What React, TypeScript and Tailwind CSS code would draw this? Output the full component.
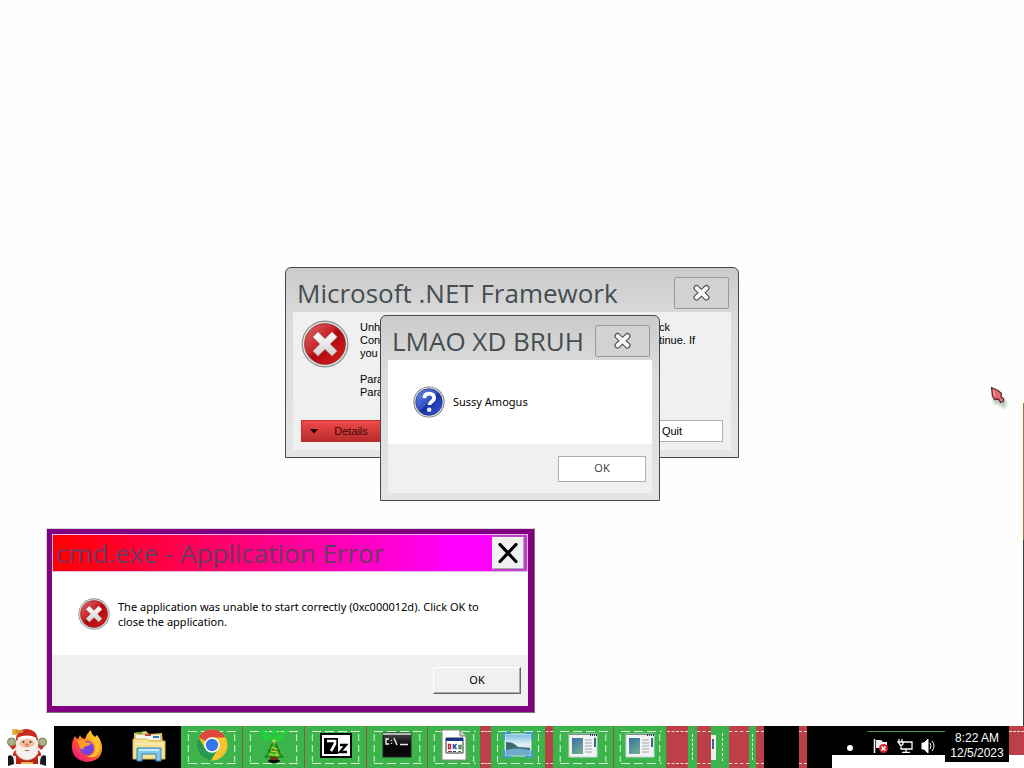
import type { ReactNode } from 'react';

const titleFont = "font-['Comic_Sans_MS','Open_Sans',sans-serif]";
const uiFont = "font-['Segoe_UI','Noto_Sans',sans-serif]";
const classicFont = "font-['Liberation_Sans',sans-serif]";

function ErrorIcon({ className }: { className: string }) {
  return (
    <svg viewBox="0 0 48 48" className={className} aria-hidden="true">
      <defs>
        <linearGradient id="errFill" x1="0" y1="0" x2="1" y2="1">
          <stop offset="0" stopColor="#dc6a68" />
          <stop offset="0.42" stopColor="#c9242a" />
          <stop offset="0.5" stopColor="#ad0910" />
          <stop offset="1" stopColor="#e02020" />
        </linearGradient>
        <linearGradient id="errCross" x1="0" y1="0" x2="0" y2="1">
          <stop offset="0" stopColor="#ffffff" />
          <stop offset="1" stopColor="#cfcfcf" />
        </linearGradient>
      </defs>
      <circle cx="24" cy="24" r="23.5" fill="#8e9292" />
      <circle cx="24" cy="24" r="22.3" fill="#dcdedc" />
      <circle cx="24" cy="24" r="20.3" fill="url(#errFill)" stroke="#8a1417" strokeWidth="0.8" />
      <path d="M11.5 17 17 11.5 24 18.5 31 11.5 36.5 17 29.5 24 36.5 31 31 36.5 24 29.5 17 36.5 11.5 31 18.5 24Z" fill="url(#errCross)" stroke="#a03035" strokeWidth="0.8" strokeLinejoin="round" />
    </svg>
  );
}

function QuestionIcon() {
  return (
    <svg viewBox="0 0 32 32" className="size-8 shrink-0" aria-hidden="true">
      <defs>
        <linearGradient id="qFill" x1="0" y1="0" x2="1" y2="1">
          <stop offset="0" stopColor="#6d8fe0" />
          <stop offset="0.48" stopColor="#2f52c4" />
          <stop offset="0.52" stopColor="#1730a0" />
          <stop offset="1" stopColor="#3a5fe0" />
        </linearGradient>
      </defs>
      <circle cx="16" cy="16" r="15.6" fill="#6f7678" />
      <circle cx="16" cy="16" r="14.7" fill="#e2e4e2" />
      <circle cx="16" cy="16" r="13.3" fill="url(#qFill)" stroke="#20347c" strokeWidth="0.7" />
      <path d="M11.3 12.2C11.5 9 13.7 7.6 16.2 7.6 19.2 7.6 21.2 9.3 21.2 12c0 3.6-4.8 3.3-4.8 7" fill="none" stroke="#fff" strokeWidth="3.8" />
      <circle cx="16.2" cy="23.8" r="2.3" fill="#e4e8f2" />
    </svg>
  );
}

function GlassClose({ label }: { label: string }) {
  return (
    <button aria-label={label} className="flex h-8 w-[55px] shrink-0 items-center justify-center rounded-[2px] border border-[#999] bg-[#d2d2d2]">
      <svg viewBox="0 0 20 18" className="h-[18px] w-5">
        <path d="M4.5 4 14.5 13.5M14.5 4 4.5 13.5" stroke="#4b4d4f" strokeWidth="6" strokeLinecap="round" />
        <path d="M4.5 4 14.5 13.5M14.5 4 4.5 13.5" stroke="#f7f7f7" strokeWidth="3.8" strokeLinecap="round" />
      </svg>
    </button>
  );
}

function GlassWindow({ title, place, children }: { title: string; place: string; children: ReactNode }) {
  return (
    <section className={`absolute flex flex-col rounded-t-md border border-[#48484a] bg-linear-to-b from-[#cbcbcb] via-[#dcdcdc] via-30% to-[#e5e5e5] px-[7px] pb-[7px] ${place}`}>
      <header className="flex h-11 shrink-0 items-start justify-between pt-[9px] pr-[2px] pl-1">
        <h2 className={`text-[26px] leading-8 whitespace-nowrap text-[#454d50] ${titleFont}`}>{title}</h2>
        <GlassClose label={`Close ${title}`} />
      </header>
      {children}
    </section>
  );
}

function FrameworkDialog() {
  return (
    <GlassWindow title="Microsoft .NET Framework" place="top-[267px] left-[285px] h-[191px] w-[454px]">
      <div className={`flex grow flex-col justify-between bg-[#f0f0f0] px-2 pt-2 pb-2 text-[11px] leading-[13px] text-black ${classicFont}`}>
        <div className="flex gap-[11px]">
          <ErrorIcon className="size-12 shrink-0" />
          <div className="flex grow justify-between pt-px pr-6">
            <div>
              <p>Unh</p>
              <p>Cont</p>
              <p>you</p>
              <p className="pt-[13px]">Para</p>
              <p>Para</p>
            </div>
            <div className="w-10">
              <p>ck</p>
              <p className="whitespace-nowrap">tinue. If</p>
            </div>
          </div>
        </div>
        <div className="flex justify-between">
          <button className="relative h-[22px] w-[100px] border border-[#c03232] bg-linear-to-b from-[#f04a4a] to-[#b82c2c] text-[#3c0808]">
            <svg viewBox="0 0 8 5" className="absolute top-2 left-2 h-[5px] w-2"><path d="M0 0H8L4 4.5Z" fill="#200" /></svg>
            Details
          </button>
          <button className="h-[22px] w-[102px] border border-[#b0b0b0] bg-white">Quit</button>
        </div>
      </div>
    </GlassWindow>
  );
}

function MessageDialog() {
  return (
    <GlassWindow title="LMAO XD BRUH" place="top-[315px] left-[380px] h-[186px] w-[280px]">
      <div className={`flex grow flex-col text-[11px] text-black ${uiFont}`}>
        <div className="flex grow items-center gap-2 bg-white pl-[25px]">
          <QuestionIcon />
          <p>Sussy Amogus</p>
        </div>
        <div className="flex h-[49px] items-center justify-end bg-[#f0f0f0] pr-[6px]">
          <button className="h-[26px] w-[88px] border border-[#adadad] bg-white text-[#444]">OK</button>
        </div>
      </div>
    </GlassWindow>
  );
}

function AppErrorDialog() {
  return (
    <section className="absolute top-[528px] left-[46px] h-[185px] w-[489px] border border-t-[#d9d3df] border-r-[#777] border-b-[#777] border-l-[#d9d3df]">
      <div className={`flex h-full flex-col border-5 border-r-6 border-b-6 border-[#800080] bg-[#f0f0f0] text-[11px] text-black ${uiFont}`}>
        <header className="flex h-[38px] shrink-0 items-center justify-between border border-[#e5b8ee] bg-linear-to-r/srgb from-[#ff0000] to-[#ff00ff] to-85% pl-[3px]">
          <h2 className={`text-[26px] leading-9 whitespace-nowrap text-[#6b3a60] ${titleFont}`}>cmd.exe - Application Error</h2>
          <div className="flex h-9 items-center bg-[#c040c8] pr-[3px]">
            <button aria-label="Close" className="flex size-8 items-center justify-center border border-t-white border-r-[#aaa] border-b-[#aaa] border-l-white bg-[#f0f0f0]">
              <svg viewBox="0 0 20 20" className="size-5"><path d="M2 1.5 18 18.5M18 1.5 2 18.5" stroke="#000" strokeWidth="3.2" strokeLinecap="round" /></svg>
            </button>
          </div>
        </header>
        <div className="flex grow items-center gap-2 bg-white pl-[26px]">
          <ErrorIcon className="size-8 shrink-0" />
          <p className="leading-[15px]">The application was unable to start correctly (0xc000012d). Click OK to<br />close the application.</p>
        </div>
        <div className="flex h-[51px] items-center justify-end pr-[7px]">
          <button className="h-[27px] w-[88px] border border-t-white border-r-[#666] border-b-[#666] border-l-white bg-[#f0f0f0] shadow-[inset_-1px_-1px_0_#aaa]">OK</button>
        </div>
      </div>
    </section>
  );
}

function Tile({ label, size, children }: { label: string; size: string; children?: ReactNode }) {
  return (
    <button aria-label={label} className={`relative flex h-full shrink-0 items-center justify-center border-r border-[#8f5a35] bg-[#3cb44b] ${size}`}>
      <svg className="absolute inset-0 size-full" aria-hidden="true">
        <line x1="7" y1="5.5" x2="92%" y2="5.5" stroke="#d8f5d8" strokeDasharray="9 4" />
        <line x1="7" y1="37.5" x2="92%" y2="37.5" stroke="#d8f5d8" strokeDasharray="9 4" />
        <line x1="12%" y1="8" x2="12%" y2="36" stroke="#d8f5d8" strokeDasharray="7 4" />
        <line x1="88%" y1="8" x2="88%" y2="36" stroke="#d8f5d8" strokeDasharray="7 4" />
      </svg>
      <span className="relative pb-1">{children}</span>
    </button>
  );
}

function Ribbon({ size }: { size: string }) {
  return (
    <div className={`flex h-full shrink-0 flex-col justify-between bg-[#bd3f48] pt-[5px] pb-1 ${size}`}>
      <div className="border-t border-dashed border-[#f1dede]" />
      <div className="border-t border-dashed border-[#f1dede]" />
    </div>
  );
}

function GreenBar({ size }: { size: string }) {
  return (
    <div className={`flex h-full shrink-0 justify-center bg-[#3cb44b] py-2 ${size}`}>
      <div className="border-l border-dashed border-[#d8f5d8]" />
    </div>
  );
}

function Santa() {
  return (
    <svg viewBox="0 0 40 38" className="h-[38px] w-10">
      <path d="M8 20 3 14M32 20l5-6" stroke="#c92b20" strokeWidth="6" />
      <circle cx="4.5" cy="14" r="4" fill="#a9b185" stroke="#7d7857" />
      <circle cx="35.5" cy="14" r="4" fill="#a9b185" stroke="#7d7857" />
      <ellipse cx="20" cy="27" rx="14" ry="9" fill="#cc2b20" />
      <path d="M6 32 16 30 20 33 25 30 34 32V36H6Z" fill="#b92018" />
      <path d="M7 28v9M33 28v9" stroke="#eee" strokeWidth="4" />
      <path d="M1 28q6-3 6 8l-6 2ZM39 28q-6-3-6 8l6 2Z" fill="#17181c" />
      <path d="M9 14Q8 1 20 1 31 2 31 14Z" fill="#cb2a20" />
      <path d="M5 1h6v6H5Z" fill="#e8b84a" />
      <path d="M8 4 16 3" stroke="#d39432" strokeWidth="3" />
      <path d="M9 13q11-8 22 0v12q-4 7-11 7T9 25Z" fill="#f4f1ed" stroke="#d2cbc5" strokeWidth=".6" />
      <ellipse cx="20" cy="15" rx="8" ry="4.5" fill="#f3c29d" />
      <path d="M11 11q9-4 18 0" stroke="#fff" strokeWidth="3" fill="none" />
      <circle cx="16.5" cy="14" r="1" fill="#333" /><circle cx="23.5" cy="14" r="1" fill="#333" />
      <circle cx="20" cy="17" r="2" fill="#e88468" />
      <path d="M17 22q3 2 6 0Z" fill="#c4473d" />
      <path d="M14 35h12" stroke="#e7b84f" strokeWidth="2" />
    </svg>
  );
}

function Firefox() {
  return (
    <svg viewBox="0 0 32 32" className="size-8">
      <defs>
        <linearGradient id="fox" x1="1" y1="0" x2="0.2" y2="1">
          <stop offset="0" stopColor="#fff04b" /><stop offset=".35" stopColor="#ffae25" />
          <stop offset=".65" stopColor="#ff5038" /><stop offset="1" stopColor="#e31588" />
        </linearGradient>
      </defs>
      <path d="M4 6Q5 8 7 9L9 5q1 3 5 4 2-6 6-9 0 4 4 7l2-2q5 6 5 13 0 13-15 14Q1 30 1 17 1 10 4 6Z" fill="url(#fox)" />
      <circle cx="16" cy="18" r="7" fill="#7542e5" />
      <path d="M6 10q5-1 9 2l5 1q-1 3-5 3-3 1-3 4-4-2-4-5Z" fill="#ff9b27" />
      <path d="M19 8q7 4 5 13-3 6-9 5 11 4 13-5Q29 12 22 5q1 3-3 3Z" fill="#ffc52e" />
    </svg>
  );
}

function Explorer() {
  return (
    <svg viewBox="0 0 34 32" className="h-8 w-[34px]">
      <path d="M2 3 14 1 17 4 30 3 32 26H2Z" fill="#e3c46a" />
      <path d="M4 5h24v5H4Z" fill="#f5f6ed" /><path d="M5 3h5" stroke="#52a646" strokeWidth="2" />
      <path d="M13 5h6" stroke="#c84a30" strokeWidth="2" /><path d="M21 7h6" stroke="#377ac4" strokeWidth="2" />
      <path d="M1 9h14l3 2h15v18H1Z" fill="#f5e295" stroke="#d6b85a" />
      <path d="M2 14h30" stroke="#fff6c5" />
      <path d="M5 18h24v13h-5v-7H10v7H5Z" fill="#83c7e9" stroke="#3385bb" />
      <path d="M7 20h20" stroke="#c5edfb" strokeWidth="2" />
    </svg>
  );
}

function Chrome() {
  return (
    <svg viewBox="0 0 32 32" className="size-8">
      <circle cx="16" cy="16" r="15.5" fill="#f5c52d" />
      <path d="M16 16 2.6 8.2A15.5 15.5 0 0 1 29.5 8.5H16Z" fill="#de483b" />
      <path d="M2.6 8.2 9.5 20 16 23.5 12.4 31A15.5 15.5 0 0 1 2.6 8.2Z" fill="#269a51" />
      <path d="M9.5 19.5 16 23.5l5.5-3L15 31.5q-2 0-3-.5Z" fill="#269a51" />
      <circle cx="16" cy="16" r="7.8" fill="#fff" /><circle cx="16" cy="16" r="6.2" fill="#3578e5" />
    </svg>
  );
}

function Tree() {
  return (
    <svg viewBox="0 0 34 36" className="h-9 w-[34px]">
      <path d="M3 5h28M5 9h24M7 12h20" stroke="#18dc36" strokeWidth="3" strokeDasharray="5 2 2 3" />
      <ellipse cx="17" cy="34" rx="6" ry="2" fill="#071207" />
      <path d="M14 28h6l1 5h-8Z" fill="#852516" />
      <path d="M17 15 21 20H19L23 24H21L26 30H8L13 24H11L15 20H13Z" fill="#3fae1c" stroke="#175f12" />
      <path d="M14 20 20 22M12 27 22 29M14 24l6 1" stroke="#b5ec4a" />
      <path d="M17 12v5M15 14h4" stroke="#e9e454" />
      <circle cx="16" cy="23" r="1" fill="#e83b2e" /><circle cx="20" cy="27" r="1" fill="#f0d936" />
    </svg>
  );
}

function SevenZip() {
  return (
    <svg viewBox="0 0 32 25" className="h-[25px] w-8">
      <rect x="1" y="1" width="30" height="23" fill="#fff" stroke="#080808" strokeWidth="2" />
      <rect x="4" y="5" width="14" height="16" fill="#000" />
      <path d="M7 8h8v3l-4 7" fill="none" stroke="#fff" strokeWidth="2.6" />
      <path d="M20 12h6l-6 7h7" fill="none" stroke="#000" strokeWidth="2.4" />
    </svg>
  );
}

function Terminal() {
  return (
    <svg viewBox="0 0 30 26" className="h-[26px] w-[30px]">
      <defs><linearGradient id="term" x1="0" y1="0" x2="0" y2="1"><stop stopColor="#4b4b4b" /><stop offset=".5" stopColor="#080808" /></linearGradient></defs>
      <rect x="1" y="1" width="28" height="24" fill="url(#term)" stroke="#242424" />
      <path d="M1 2h28" stroke="#b6b8b8" strokeWidth="2" />
      <path d="M7 7H4v5h3M9.5 8v1M9.5 11v1M12 6l3 7M18 12.5h8" fill="none" stroke="#eee" strokeWidth="1.4" />
    </svg>
  );
}

function Document() {
  return (
    <svg viewBox="0 0 26 32" className="h-8 w-[26px]">
      <path d="M1 1h18l6 6v24H1Z" fill="#fff" stroke="#888" />
      <path d="M19 1v6h6" fill="#d2d5bc" stroke="#777" />
      <path d="M5 9h17v15H5Z" fill="#fff" stroke="#333" /><path d="M5 9h17v3H5Z" fill="#153589" />
      <path d="M7.5 15.5v4h2v-4Z" fill="none" stroke="#bd2733" strokeWidth="1.4" />
      <path d="M12.5 15v5m3-5-2 2.5 2 2.5" fill="none" stroke="#2545ae" strokeWidth="1.4" />
      <path d="M18 16.5h2v3h-2Z" fill="none" stroke="#3c8844" strokeWidth="1.4" />
      <path d="M7 22.5h4" stroke="#bd2733" /><path d="M12 22.5h3" stroke="#2545ae" /><path d="M17 22.5h3" stroke="#3c8844" />
    </svg>
  );
}

function Photo() {
  return (
    <svg viewBox="0 0 30 26" className="h-[26px] w-[30px]">
      <defs><linearGradient id="sky" x1="0" y1="0" x2="0" y2="1"><stop stopColor="#79b8df" /><stop offset=".5" stopColor="#e7f5f8" /><stop offset="1" stopColor="#4c8cae" /></linearGradient></defs>
      <path d="M2 2h26v22H2Z" fill="url(#sky)" stroke="#d4edf8" />
      <path d="M3 10q7 0 12 5l12 1v3H3Z" fill="#376b70" />
      <path d="M3 18q12-3 24 0v5H3Z" fill="#6dabc8" />
      <path d="M1 8V1h7M22 1h7v7M1 18v7h7M22 25h7v-7" fill="none" stroke="#4297d0" strokeWidth="2" />
    </svg>
  );
}

function AppPreview() {
  return (
    <svg viewBox="0 0 30 25" className="h-[25px] w-[30px]">
      <defs><linearGradient id="preview" x1="0" y1="0" x2="0.5" y2="1"><stop stopColor="#396fa5" /><stop offset="1" stopColor="#6aa696" /></linearGradient></defs>
      <path d="M1 1h28v23H1Z" fill="#f2f3f4" stroke="#d0d5d5" />
      <path d="M1 1.5h28" stroke="#7b8d8b" /><path d="M22 2h7" stroke="#2e3d50" strokeWidth="2" strokeDasharray="1 1" />
      <path d="M4 5h11v16H4Z" fill="url(#preview)" />
      <path d="M17 7h7M17 10h7M17 13h7M17 16h7M17 19h7" stroke="#a0a6aa" />
      <path d="M26 5h2v9h-2Z" fill="#356998" />
    </svg>
  );
}

function Tray() {
  return (
    <div className="flex h-[42px] min-w-0 grow items-start bg-white text-white">
      <div className="relative flex h-[29px] w-[113px] shrink-0 items-center bg-black pt-[10px] pl-[15px]">
        <div className="absolute top-[5px] right-0 left-[35px] border-t border-[#439657]" />
        <button aria-label="Show hidden icons" className="mt-1 size-[6px] rounded-full bg-white" />
        <div className="ml-[20px] flex gap-2">
          <svg viewBox="0 0 16 16" className="size-4"><path d="M1.5 1v14" stroke="#fff" strokeWidth="1.5" /><path d="M3 2h5l2 2h4v6H3Z" fill="#eee" /><circle cx="10.5" cy="10.5" r="4.5" fill="#d9242b" /><path d="m8.5 8.5 4 4m0-4-4 4" stroke="#fff" strokeWidth="1.5" /></svg>
          <svg viewBox="0 0 16 16" className="size-4" fill="none" stroke="#fff" strokeWidth="1.3"><path d="M6 4h9v7H4V7M9 11v3M5 14.3h8M2 1v3m3-3v3M1 4h5v2L4 8Z" /></svg>
          <svg viewBox="0 0 16 16" className="size-4" fill="none" stroke="#fff"><path d="M1 5h2l4-4v14l-4-4H1Z" fill="#fff" /><path d="M9 5q2 3 0 6M11 3q4 5 0 10" /></svg>
        </div>
      </div>
      <div className={`h-9 w-16 shrink-0 bg-black pt-[5px] text-center text-[12px] leading-[15px] ${classicFont}`}>
        <p>8:22 AM</p>
        <p>12/5/2023</p>
      </div>
      <div className="h-[29px] grow bg-[#bd3f48] pt-[5px]"><div className="border-t border-dashed border-[#f1dede]" /></div>
    </div>
  );
}

function Taskbar() {
  return (
    <nav aria-label="Taskbar" className="flex h-[42px] w-full overflow-hidden">
      <button aria-label="Start" className="flex w-[54px] shrink-0 items-center justify-center bg-white"><Santa /></button>
      <div className="flex w-[127px] shrink-0 items-start gap-[29px] bg-black pt-1 pl-[17px]">
        <button aria-label="Firefox"><Firefox /></button>
        <button aria-label="File Explorer"><Explorer /></button>
      </div>
      <Tile label="Chrome" size="w-[62px]"><Chrome /></Tile>
      <Tile label="Christmas tree" size="w-[62px]"><Tree /></Tile>
      <Tile label="7-Zip" size="w-[62px]"><SevenZip /></Tile>
      <Tile label="Command Prompt" size="w-[61px]"><Terminal /></Tile>
      <Tile label="Document" size="w-[53px]"><Document /></Tile>
      <Ribbon size="w-[10px]" />
      <Tile label="Pictures" size="w-[55px]"><Photo /></Tile>
      <Ribbon size="w-[7px]" />
      <Tile label="Application" size="w-[61px]"><AppPreview /></Tile>
      <Tile label="Application 2" size="w-[53px]"><AppPreview /></Tile>
      <Ribbon size="w-[21px]" />
      <GreenBar size="w-[9px]" />
      <Ribbon size="w-[14px]" />
      <div className="flex w-[18px] shrink-0 items-center bg-[#3cb44b]">
        <svg viewBox="0 0 5 25" className="h-[25px] w-[5px]"><path d="M0 0h5v25H0Z" fill="#eee" /><path d="M1 4h2v10H1Z" fill="#356998" /></svg>
        <div className="ml-[6px] h-7 border-l border-dashed border-[#d8f5d8]" />
      </div>
      <Ribbon size="w-[20px]" />
      <GreenBar size="w-[7px]" />
      <Ribbon size="w-[8px]" />
      <div className="w-[35px] shrink-0 bg-black" />
      <Ribbon size="w-[8px]" />
      <div className="w-[25px] shrink-0 bg-black" />
      <Tray />
    </nav>
  );
}

function Cursor() {
  return (
    <svg viewBox="0 0 22 26" className="absolute top-[384px] left-[988px] h-[26px] w-[22px]" aria-hidden="true">
      <defs><filter id="soft"><feGaussianBlur stdDeviation="1.4" /></filter></defs>
      <path d="M4 10 6 20 12 21 15 25 19 21 17 15Z" fill="#9fb6aa" opacity=".7" filter="url(#soft)" />
      <path d="M3.5 3.5 4.5 12 6.5 15.5 10.5 15 12.5 18.5 15.5 17.5 15.5 14.5 13 13 13.5 9.5 10 6.5Z" fill="#e8696c" stroke="#612e38" strokeWidth="1.3" strokeLinejoin="round" />
      <path d="m5.5 6 1 6" stroke="#f5a9a4" />
    </svg>
  );
}

export default function App() {
  return (
    <div className="flex min-h-screen flex-col overflow-hidden bg-white">
      <main className="relative grow bg-[#fefefe]">
        <FrameworkDialog />
        <MessageDialog />
        <AppErrorDialog />
        <Cursor />
        <div className="absolute top-[403px] right-0 bottom-0 flex w-px flex-col">
          <div className="h-[137px] bg-[#a5732a]" />
          <div className="grow bg-[#3c3c3c]" />
        </div>
      </main>
      <Taskbar />
    </div>
  );
}
